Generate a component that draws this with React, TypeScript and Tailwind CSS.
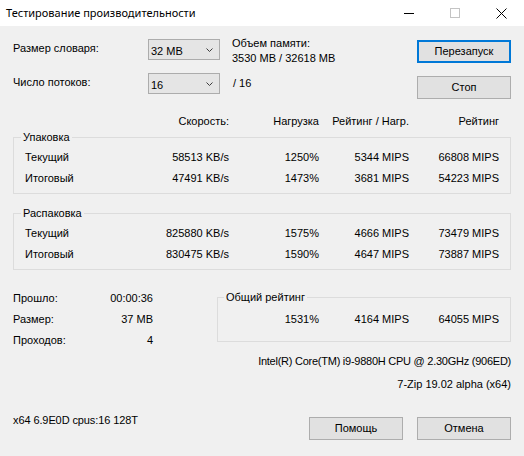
import * as React from "react";

// column grid shared by the header row and the two groups
const speedCols = "grid grid-cols-[114px_90px_90px_90px_90px]";

const packRows = [
  { label: "Текущий", cells: ["58513 KB/s", "1250%", "5344 MIPS", "66808 MIPS"] },
  { label: "Итоговый", cells: ["47491 KB/s", "1473%", "3681 MIPS", "54223 MIPS"] },
];

const unpackRows = [
  { label: "Текущий", cells: ["825880 KB/s", "1575%", "4666 MIPS", "73479 MIPS"] },
  { label: "Итоговый", cells: ["830475 KB/s", "1590%", "4647 MIPS", "73887 MIPS"] },
];

const stats = [
  { label: "Прошло:", value: "00:00:36" },
  { label: "Размер:", value: "37 MB" },
  { label: "Проходов:", value: "4" },
];

function Chevron() {
  return (
    <svg width="7" height="4" viewBox="0 0 7 4" className="shrink-0 mt-[8px]">
      <path d="M0.5 0.5 L3.5 3.5 L6.5 0.5" fill="none" stroke="#3c3c3c" strokeWidth="1" />
    </svg>
  );
}

function Combo({ value }: { value: string }) {
  return (
    <div className="w-[72px] h-[21px] border border-[#acacac] bg-[#e5e5e5] flex items-start justify-between pl-[2px] pr-[6px]">
      <span className="leading-[19px] pt-[2px]">{value}</span>
      <Chevron />
    </div>
  );
}

function Button({ label, primary }: { label: string; primary?: boolean }) {
  return (
    <button
      className={
        "w-[94px] h-[23px] bg-[#e1e1e1] flex items-center justify-center leading-[15px] " +
        (primary ? "border-2 border-[#0078d7]" : "border border-[#adadad]")
      }
    >
      {label}
    </button>
  );
}

function Group({ title, rows }: { title: string; rows: { label: string; cells: string[] }[] }) {
  return (
    <fieldset className="border border-[#dcdcdc] pt-[3px] pb-[4px]">
      <legend className="ml-[7px] px-[2px] leading-[14px]">{title}</legend>
      <div className="pl-[11px]">
        {rows.map((r) => (
          <div key={r.label} className={`${speedCols} h-[21px] leading-[21px]`}>
            <span>{r.label}</span>
            {r.cells.map((c, i) => (
              <span key={i} className="text-right">
                {c}
              </span>
            ))}
          </div>
        ))}
      </div>
    </fieldset>
  );
}

function TitleBar() {
  return (
    <div className="h-[26px] bg-white flex items-stretch shrink-0">
      <span className="pl-[6px] self-center font-['Segoe_UI','Noto_Sans',sans-serif] text-[11px] leading-[16px]">
        Тестирование производительности
      </span>
      <div className="ml-auto flex">
        <div className="w-[46px] flex items-center justify-center">
          <svg width="10" height="10" viewBox="0 0 10 10">
            <path d="M0 5.5 H10" stroke="#000" strokeWidth="1" />
          </svg>
        </div>
        <div className="w-[46px] flex items-center justify-center">
          <svg width="10" height="10" viewBox="0 0 10 10">
            <rect x="0.5" y="0.5" width="9" height="9" fill="none" stroke="#c4c4c4" strokeWidth="1" />
          </svg>
        </div>
        <div className="w-[46px] flex items-center justify-center">
          <svg width="11" height="11" viewBox="0 0 11 11">
            <path d="M0.5 0.5 L10.5 10.5 M10.5 0.5 L0.5 10.5" stroke="#000" strokeWidth="1" />
          </svg>
        </div>
      </div>
    </div>
  );
}

export default function App() {
  return (
    <div className="w-[524px] h-[456px] bg-[#f0f0f0] flex flex-col overflow-hidden text-black font-['Liberation_Sans',Arial,sans-serif] text-[11px]">
      <TitleBar />
      <div className="flex flex-col pl-[13px] pr-[13px]">
        {/* dictionary / threads / memory / restart */}
        <div className="flex mt-[9px]">
          <div className="flex flex-col pt-[4px]">
            <div className="flex items-start">
              <span className="w-[135px] leading-[19px]">Размер словаря:</span>
              <Combo value="32 MB" />
            </div>
            <div className="flex items-start mt-[13px]">
              <span className="w-[135px] leading-[19px]">Число потоков:</span>
              <Combo value="16" />
            </div>
          </div>
          <div className="flex flex-col ml-[12px] pt-[1px]">
            <span className="leading-[15px]">Объем памяти:</span>
            <span className="leading-[15px]">3530 MB / 32618 MB</span>
            <span className="leading-[21px] mt-[7px] pl-[1px]">/ 16</span>
          </div>
          <div className="ml-auto flex flex-col gap-[13px] pt-[5px]">
            <Button label="Перезапуск" primary />
            <Button label="Стоп" />
          </div>
        </div>

        {/* column headers */}
        <div className={`${speedCols} pl-[12px] mt-[15px] h-[15px] leading-[15px]`}>
          <span />
          <span className="text-right">Скорость:</span>
          <span className="text-right">Нагрузка</span>
          <span className="text-right">Рейтинг / Нагр.</span>
          <span className="text-right">Рейтинг</span>
        </div>

        <div className="mt-[1px]">
          <Group title="Упаковка" rows={packRows} />
        </div>
        <div className="mt-[12px]">
          <Group title="Распаковка" rows={unpackRows} />
        </div>

        {/* elapsed stats + total rating */}
        <div className="flex items-start mt-[18px]">
          <div className="w-[140px] flex flex-col">
            {stats.map((s) => (
              <div key={s.label} className="flex justify-between h-[21px] leading-[21px]">
                <span>{s.label}</span>
                <span>{s.value}</span>
              </div>
            ))}
          </div>
          <fieldset className="ml-[64px] mt-[2px] w-[294px] border border-[#dcdcdc] pt-[5px] pb-[11px]">
            <legend className="ml-[6px] px-[2px] leading-[14px]">Общий рейтинг</legend>
            <div className="grid grid-cols-[101px_90px_90px] h-[21px] leading-[21px]">
              <span className="text-right">1531%</span>
              <span className="text-right">4164 MIPS</span>
              <span className="text-right">64055 MIPS</span>
            </div>
          </fieldset>
        </div>

        <div className="text-right h-[21px] leading-[21px] tracking-[-0.25px]">
          Intel(R) Core(TM) i9-9880H CPU @ 2.30GHz (906ED)
        </div>
        <div className="text-right h-[21px] leading-[21px] mt-[2px]">7-Zip 19.02 alpha (x64)</div>

        {/* footer */}
        <div className="flex items-start mt-[15px]">
          <span className="leading-[21px] tracking-[-0.1px]">x64 6.9E0D cpus:16 128T</span>
          <div className="ml-auto flex gap-[14px] mt-[7px]">
            <Button label="Помощь" />
            <Button label="Отмена" />
          </div>
        </div>
      </div>
    </div>
  );
}
